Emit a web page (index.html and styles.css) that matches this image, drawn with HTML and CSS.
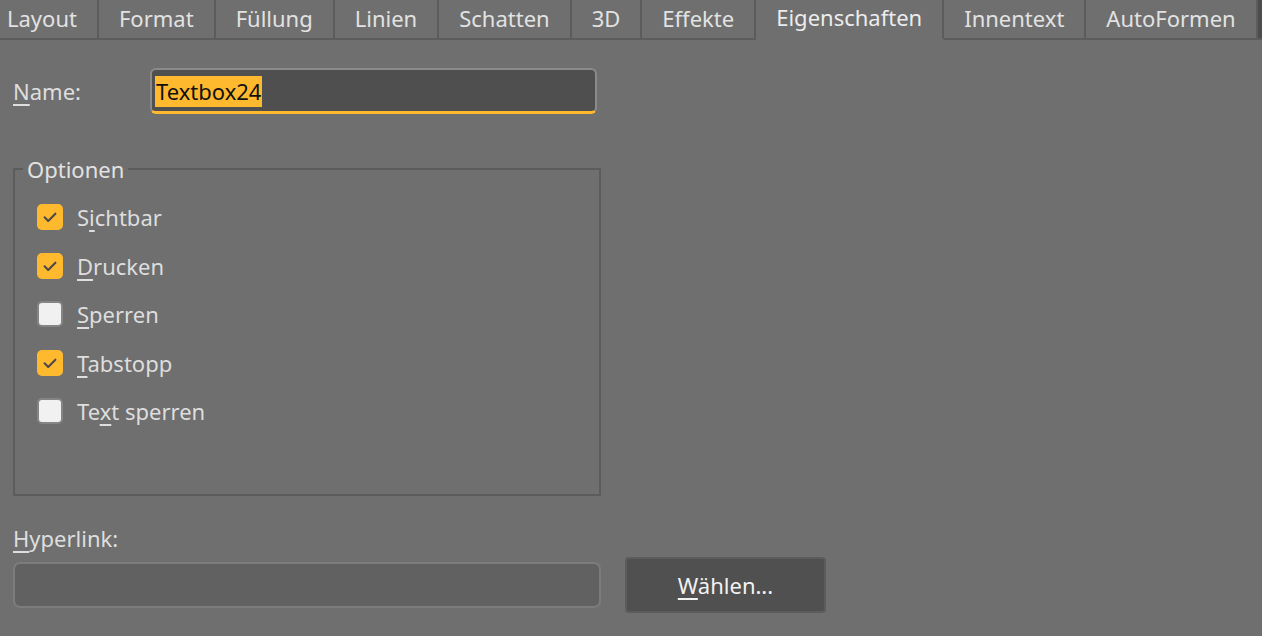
FILE: index.html
```html
<!DOCTYPE html>
<html lang="de">
<head>
<meta charset="utf-8">
<title>Eigenschaften</title>
<link rel="stylesheet" href="styles.css">
</head>
<body>
<div class="tabs">
  <div class="tab first">Layout</div>
  <div class="tab">Format</div>
  <div class="tab">Füllung</div>
  <div class="tab">Linien</div>
  <div class="tab">Schatten</div>
  <div class="tab">3D</div>
  <div class="tab">Effekte</div>
  <div class="tab active">Eigenschaften</div>
  <div class="tab">Innentext</div>
  <div class="tab">AutoFormen</div>
  <div class="tabs-edge"></div>
</div>

<div class="content">
  <div class="name-row">
    <span class="label"><u>N</u>ame:</span>
    <div class="name-input"><span class="sel">Textbox24</span></div>
  </div>

  <fieldset class="options">
    <legend>Optionen</legend>
    <div class="opt-list">
      <div class="opt"><span class="cb checked"><svg viewBox="0 0 26 26" width="26" height="26"><path d="M7.6 13.3 L11.2 16.9 L18.4 9.7" fill="none" stroke="#4a4a4a" stroke-width="2.1" stroke-linecap="round" stroke-linejoin="round"/></svg></span><span class="opt-text">S<u>i</u>chtbar</span></div>
      <div class="opt"><span class="cb checked"><svg viewBox="0 0 26 26" width="26" height="26"><path d="M7.6 13.3 L11.2 16.9 L18.4 9.7" fill="none" stroke="#4a4a4a" stroke-width="2.1" stroke-linecap="round" stroke-linejoin="round"/></svg></span><span class="opt-text"><u>D</u>rucken</span></div>
      <div class="opt"><span class="cb"></span><span class="opt-text"><u>S</u>perren</span></div>
      <div class="opt"><span class="cb checked"><svg viewBox="0 0 26 26" width="26" height="26"><path d="M7.6 13.3 L11.2 16.9 L18.4 9.7" fill="none" stroke="#4a4a4a" stroke-width="2.1" stroke-linecap="round" stroke-linejoin="round"/></svg></span><span class="opt-text"><u>T</u>abstopp</span></div>
      <div class="opt"><span class="cb"></span><span class="opt-text">Te<u>x</u>t sperren</span></div>
    </div>
  </fieldset>

  <div class="hyper-label"><u>H</u>yperlink:</div>
  <div class="hyper-row">
    <div class="hyper-input"></div>
    <div class="btn"><u>W</u>ählen...</div>
  </div>
</div>
</body>
</html>
```

FILE: styles.css
```css
html, body {
  margin: 0;
  padding: 0;
}
body {
  background: #6f6f6f;
  font-family: "Noto Sans", "Open Sans", sans-serif;
  font-size: 22px;
  color: #dedede;
  width: 1262px;
  height: 636px;
  overflow: hidden;
}
u {
  text-decoration: underline;
  text-decoration-thickness: 2px;
  text-underline-offset: 4px;
}

.tabs {
  display: flex;
  height: 38px;
  border-bottom: 2px solid #5c5c5c;
}
.tab {
  box-sizing: border-box;
  height: 40px;
  padding: 0 20px;
  line-height: 37px;
  border-right: 2px solid #5c5c5c;
  border-bottom: 2px solid #5c5c5c;
  color: #e2e2e2;
  white-space: nowrap;
}
.tab.first {
  padding-left: 7px;
  padding-right: 20px;
}
.tab.active {
  border-bottom-color: #6f6f6f;
  line-height: 34px;
  padding-bottom: 4px;
  color: #ececec;
}
.tabs-edge {
  flex: 1;
  height: 38px;
  background: #4c4c4c;
}

.content {
  padding-left: 13px;
}

.name-row {
  display: flex;
  align-items: center;
  margin-top: 28px;
  height: 46px;
}
.label {
  width: 137px;
  line-height: 30px;
}
.name-input {
  box-sizing: border-box;
  width: 447px;
  height: 46px;
  background: #4f4f4f;
  border: 2px solid #8a8a8a;
  border-bottom: 3px solid #ffb92e;
  border-radius: 6px;
  padding: 6px 0 0 3px;
}
.sel {
  display: inline-block;
  background: #ffb92e;
  color: #111;
  line-height: 31px;
  padding: 0 1px;
}

.options {
  box-sizing: border-box;
  width: 588px;
  margin: 42px 0 0 0;
  padding: 0;
  border: 2px solid #5c5c5c;
  min-inline-size: 0;
}
.options legend {
  margin-left: 8px;
  padding: 0 4px;
  line-height: 26px;
  color: #e2e2e2;
}
.opt-list {
  padding: 11px 0 58px 22px;
}
.opt {
  display: flex;
  align-items: center;
  height: 48.5px;
}
.cb {
  box-sizing: border-box;
  width: 26px;
  height: 26px;
  border-radius: 5px;
  background: #f1f1f1;
  border: 2px solid #858585;
  display: flex;
  align-items: center;
  justify-content: center;
}
.cb.checked {
  background: #ffb92e;
  border: none;
}
.cb svg {
  display: block;
}
.opt-text {
  margin-left: 14px;
  line-height: 30px;
}

.hyper-label {
  margin-top: 27px;
  line-height: 30px;
}
.hyper-row {
  display: flex;
  align-items: center;
  margin-top: 4px;
  height: 56px;
}
.hyper-input {
  box-sizing: border-box;
  width: 588px;
  height: 46px;
  background: #616161;
  border: 2px solid #7c7c7c;
  border-radius: 7px;
}
.btn {
  box-sizing: border-box;
  width: 201px;
  height: 56px;
  margin-left: 24px;
  background: #505050;
  border: 2px solid #5c5c5c;
  border-radius: 4px;
  color: #f2f2f2;
  text-align: center;
  line-height: 52px;
}
```
